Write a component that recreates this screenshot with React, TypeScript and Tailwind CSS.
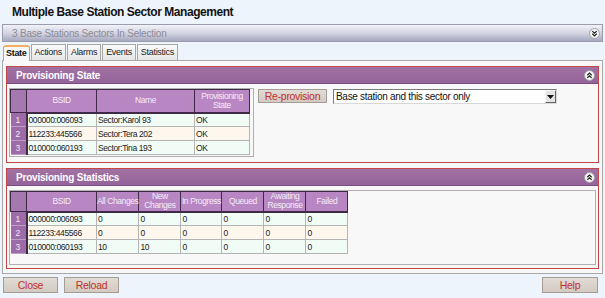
import React from 'react';

const font = "font-['Liberation_Sans',Arial,sans-serif]";

const Chevrons: React.FC<{ down?: boolean }> = ({ down }) => (
  <svg width="11" height="11" viewBox="0 0 11 11" className={down ? 'rotate-180' : ''}>
    <circle cx="5.5" cy="5.5" r="5" fill="#f6f6f6" stroke="#a0a0a0" />
    <path d="M3.3 5.2 L5.5 3.1 L7.7 5.2 M3.3 7.9 L5.5 5.8 L7.7 7.9" fill="none" stroke="#222" strokeWidth="1.2" />
  </svg>
);

const Button: React.FC<{ label: string; className?: string }> = ({ label, className }) => (
  <button className={`border border-[#a59c94] bg-gradient-to-b from-[#e2dcd6] to-[#d2cac2] text-[10.5px] tracking-[-0.3px] leading-[12px] text-[#c0302c] ${className ?? ''}`}>
    {label}
  </button>
);

const PanelHeader: React.FC<{ title: string }> = ({ title }) => (
  <div className="h-[17px] flex items-center justify-between bg-gradient-to-b from-[#a272a4] to-[#94649a] pl-[9px] pr-[3px] border-b border-[#7a4a80]">
    <span className="text-[10px] tracking-[-0.2px] font-bold text-white">{title}</span>
    <Chevrons />
  </div>
);

type Col = { label: string[]; w: number };

const DataTable: React.FC<{ cols: Col[]; rows: string[][]; headH: number }> = ({ cols, rows, headH }) => (
  <table className="border-collapse table-fixed text-[8.5px] tracking-[-0.4px] text-[#222]">
    <colgroup>
      <col style={{ width: 16 }} />
      {cols.map((c) => (
        <col key={c.label.join(' ')} style={{ width: c.w }} />
      ))}
    </colgroup>
    <thead>
      <tr style={{ height: headH }}>
        <th className="bg-[#a678b0] border border-[#3e2a46]"></th>
        {cols.map((c) => (
          <th key={c.label.join(' ')} className="bg-[#b886c2] border border-[#3e2a46] border-b-2 text-[#f6ecf8] font-normal leading-[9px] text-center px-0 whitespace-nowrap">
            {c.label.map((l, k) => (
              <div key={k}>{l}</div>
            ))}
          </th>
        ))}
      </tr>
    </thead>
    <tbody>
      {rows.map((r, i) => (
        <tr key={i} className={`h-[14px] ${i % 2 === 1 ? 'bg-[#fdf7ee]' : 'bg-[#f1fcf6]'}`}>
          <td className="bg-[#9d6ca8] border-r-2 border-[#3e2a46] border-b border-b-[#b9a0c0] text-[#f4e8f6] pl-[5px] leading-[12px]">{i + 1}</td>
          {r.map((v, j) => (
            <td key={j} className="border border-[#b4b4b4] pl-[1px] leading-[12px] whitespace-nowrap overflow-hidden">
              {v}
            </td>
          ))}
        </tr>
      ))}
    </tbody>
  </table>
);

const stateRows = [
  ['000000:006093', 'Sector:Karol 93', 'OK'],
  ['112233:445566', 'Sector:Tera 202', 'OK'],
  ['010000:060193', 'Sector:Tina 193', 'OK'],
];

const statRows = [
  ['000000:006093', '0', '0', '0', '0', '0', '0'],
  ['112233:445566', '0', '0', '0', '0', '0', '0'],
  ['010000:060193', '10', '10', '0', '0', '0', '0'],
];

const tabs = ['State', 'Actions', 'Alarms', 'Events', 'Statistics'];

export default function App() {
  return (
    <div className={`w-[605px] h-[298px] overflow-hidden bg-[#eef4fb] flex flex-col ${font}`}>
      <div className="h-[24px] pl-[12px] pt-[5px] text-[12px] tracking-[-0.45px] leading-[14px] font-bold text-[#111]">
        Multiple Base Station Sector Management
      </div>

      <div className="mx-[2px] h-[18px] border border-[#9c9cac] bg-gradient-to-b from-[#f2f2f8] via-[#d4d4e2] to-[#a8a8c0] flex items-center justify-between pl-[9px] pr-[2px]">
        <span className="text-[10px] tracking-[-0.2px] text-[#8c8c98]">3 Base Stations Sectors In Selection</span>
        <Chevrons down />
      </div>

      <div className="flex gap-[1px] pl-[3px] mt-[2px] h-[16px] items-end">
        {tabs.map((t, i) =>
          i === 0 ? (
            <div key={t} className="h-[16px] px-[2px] border border-[#a8a8a8] border-b-0 border-t-2 border-t-[#f0b060] rounded-t-[3px] bg-[#f8f8f8] text-[9px] tracking-[-0.3px] leading-[13px] font-bold text-[#111] relative top-[1px]">
              {t}
            </div>
          ) : (
            <div key={t} className="h-[16px] px-[3px] border border-[#a8a8a8] border-b-0 bg-gradient-to-b from-[#fafafa] to-[#e6e6e6] text-[9px] tracking-[-0.3px] leading-[15px] text-[#222]">
              {t}
            </div>
          )
        )}
      </div>

      <div className="mx-[2px] h-[214px] border border-[#a8a8a8] bg-[#f8f8f8] pt-[5px] px-[3px] flex flex-col gap-[5px]">
        <div className="h-[97px] border border-[#c24848] flex flex-col">
          <PanelHeader title="Provisioning State" />
          <div className="flex-1 flex items-start pl-[2px] pt-[4px] gap-[4px]">
            <div className="h-[69px] w-[245px] border border-[#b0b0b0] bg-[#f8f8f8]">
              <DataTable
                headH={23}
                rows={stateRows}
                cols={[
                  { label: ['BSID'], w: 70 },
                  { label: ['Name'], w: 98 },
                  { label: ['Provisioning', 'State'], w: 55 },
                ]}
              />
            </div>
            <Button label="Re-provision" className="w-[69px] h-[14px] mt-[1px]" />
            <div className="ml-[2px] mt-[1px] w-[224px] h-[15px] bg-white border border-[#7a7a7a] border-r-[#d8d8d8] border-b-[#d8d8d8] flex items-center justify-between">
              <span className="pl-[2px] text-[10px] tracking-[-0.3px] leading-[13px] text-[#111]">Base station and this sector only</span>
              <span className="w-[11px] h-[13px] bg-[#e4e4e4] border border-[#f8f8f8] border-r-[#666] border-b-[#666] flex items-center justify-center">
                <svg width="7" height="4" viewBox="0 0 7 4">
                  <path d="M0 0 H7 L3.5 4 Z" fill="#111" />
                </svg>
              </span>
            </div>
          </div>
        </div>

        <div className="h-[101px] border border-[#c24848] flex flex-col">
          <PanelHeader title="Provisioning Statistics" />
          <div className="flex-1 pl-[2px] pr-[2px] pt-[4px]">
            <div className="h-[75px] border border-[#b0b0b0] bg-[#f8f8f8]">
              <DataTable
                headH={20}
                rows={statRows}
                cols={[
                  { label: ['BSID'], w: 70 },
                  { label: ['All Changes'], w: 42 },
                  { label: ['New', 'Changes'], w: 42 },
                  { label: ['In Progress'], w: 41 },
                  { label: ['Queued'], w: 42 },
                  { label: ['Awaiting', 'Response'], w: 42 },
                  { label: ['Failed'], w: 42 },
                ]}
              />
            </div>
          </div>
        </div>
      </div>

      <div className="flex items-start justify-between px-[3px] mt-[3px]">
        <div className="flex gap-[6px]">
          <Button label="Close" className="w-[55px] h-[16px]" />
          <Button label="Reload" className="w-[55px] h-[16px]" />
        </div>
        <Button label="Help" className="w-[56px] h-[16px] mr-[4px]" />
      </div>
    </div>
  );
}
